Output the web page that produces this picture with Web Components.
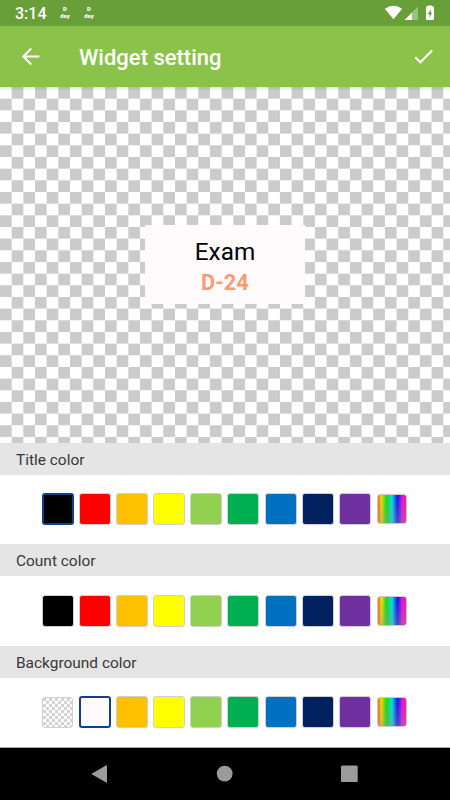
<!DOCTYPE html>
<html lang="en">
<head>
<meta charset="utf-8">
<title>Widget setting</title>
<style>
  body {
    margin: 0;
    background: #fff;
    font-family: Roboto, sans-serif;
  }
</style>
</head>
<body>
<widget-settings></widget-settings>
<script>
(function () {
  class StatusBar extends HTMLElement {
    connectedCallback() {
      this.attachShadow({ mode: "open" });
      this.shadowRoot.innerHTML = `
    <style>
      :host {
        display: flex;
        box-sizing: border-box;
        height: 26px;
        padding: 0 14px 0 15px;
        background: #689f38;
        color: #fff;
      }
      time {
        width: 44px;
        font: 500 16px/28px Roboto, sans-serif;
      }
      .day {
        width: 12px;
        margin-right: 12px;
        padding-top: 6px;
        font: 900 5.8px/6.5px Roboto, sans-serif;
        text-align: center;
      }
      svg {
        display: block;
        margin-left: auto;
      }
    </style>
    <time>3:14</time>
    <div class="day">D<br>day</div>
    <div class="day">D<br>day</div>
    <svg width="52" height="26" viewBox="384 0 52 26" fill="#fff">
      <path d="M384.8 8.8Q393.5 2.6 402.2 8.8L393.5 19.2Z"/>
      <path d="M418 6.5V20H404.5Z" opacity=".35"/>
      <path d="M412 12.5V20H404.5Z"/>
      <path fill-rule="evenodd" d="M428 6.2V5.6H432V6.2H433.2Q434 6.2 434 7V19.2Q434 20 433.2 20H426.8Q426 20 426 19.2V7Q426 6.2 426.8 6.2ZM430.7 9.2L427.8 14H429.5V17.4L432.2 12.7H430.7Z"/>
    </svg>
    `;
    }
  }

  class AppBar extends HTMLElement {
    connectedCallback() {
      this.attachShadow({ mode: "open" });
      this.shadowRoot.innerHTML = `
    <style>
      :host {
        display: flex;
        align-items: center;
        box-sizing: border-box;
        height: 61px;
        padding: 0 14px 0 18px;
        background: #8bc34a;
        color: #fff;
      }
      h1 {
        flex: 1;
        margin: 0 0 0 36px;
        font: 500 22px/30px Roboto, sans-serif;
        padding-top: 2px;
      }
      svg {
        display: block;
        fill: #fff;
      }
    </style>
    <svg width="25" height="25" viewBox="0 0 24 24"><path d="M20.5 11.1H7.4l6-6L12 3.7 3.7 12l8.3 8.3 1.4-1.4-6-6h13.1z"/></svg>
    <h1><slot></slot></h1>
    <svg width="25" height="25" viewBox="0 0 24 24"><path d="M9 16.17 4.83 12l-1.42 1.41L9 19 21 7l-1.41-1.41z"/></svg>
    `;
    }
  }

  class WidgetPreview extends HTMLElement {
    connectedCallback() {
      this.attachShadow({ mode: "open" });
      this.shadowRoot.innerHTML = `
    <style>
      :host {
        display: flex;
        align-items: center;
        justify-content: center;
        height: 355.5px;
        background:
          linear-gradient(rgba(0, 0, 0, 0.1), rgba(0, 0, 0, 0) 4px),
          conic-gradient(#cbcbcb 25%, #fff 0 50%, #cbcbcb 0 75%, #fff 0) 0 0 / 23.333px 23.333px;
      }
      .card {
        box-sizing: border-box;
        width: 160px;
        height: 79px;
        padding-top: 11px;
        background: #fffafb;
        text-align: center;
      }
      .title {
        font-size: 24.3px;
        line-height: 31px;
        color: #000;
      }
      .count {
        font-size: 21.8px;
        line-height: 31px;
        font-weight: 700;
        color: #ff9b74;
      }
    </style>
    <div class="card">
      <div class="title"><slot name="title"></slot></div>
      <div class="count"><slot name="count"></slot></div>
    </div>
    `;
    }
  }

  class ColorSwatch extends HTMLElement {
    connectedCallback() {
      const color = this.getAttribute("color");
      this.attachShadow({ mode: "open" });
      this.shadowRoot.innerHTML = `
    <style>
      :host {
        display: block;
        box-sizing: border-box;
        width: 32px;
        height: 32px;
        border: 1.5px solid #cfcfcf;
        border-radius: 3px;
        background: ${color};
      }
      :host([selected]) {
        border: 2px solid #123f8c;
      }
      :host([color="clear"]) {
        background: repeating-conic-gradient(#fff 0 25%, #d3d3d3 0 50%) 0 0 / 6px 6px;
        height: 31px;
        width: 31px;
        margin-right: 1px;
        border: 1px solid #d0d0d0;
      }
      :host([color="rainbow"]) {
        width: 30px;
        height: 30px;
        margin-left: 1px;
        border: 1px solid #d0c8c8;
        background:
          linear-gradient(rgba(128, 128, 128, 0), rgba(150, 150, 150, 0.4)) border-box,
          linear-gradient(90deg, #f84800, #f0e000 15%, #10e010 31%, #00e0e8 50%, #1010f0 68%, #f010e0 86%, #ff1060) border-box;
      }
    </style>
    `;
    }
  }

  class ColorSection extends HTMLElement {
    static colors = [
      "#000000", "#ff0000", "#ffc000", "#ffff00", "#92d050",
      "#00b050", "#0070c0", "#002060", "#7030a0", "rainbow",
    ];
    connectedCallback() {
      const colors = [...this.constructor.colors];
      const selected = this.getAttribute("selected");
      if (this.hasAttribute("background")) {
        colors.splice(0, 2, "clear", "#fffafb");
      }
      this.attachShadow({ mode: "open" });
      this.shadowRoot.innerHTML = `
    <style>
      :host {
        display: block;
        height: 101.6px;
      }
      h2 {
        margin: 0;
        height: 32px;
        padding-left: 16px;
        background: #e5e5e5;
        color: #383838;
        font: 400 15.45px/34px Roboto, sans-serif;
      }
      .colors {
        display: flex;
        align-items: center;
        gap: 5.1px;
        height: 69px;
        padding-left: 42px;
      }
    </style>
    <h2><slot></slot></h2>
    <div class="colors">
      ${colors
        .map((c) => `<color-swatch color="${c}" ${c === selected ? "selected" : ""}></color-swatch>`)
        .join("")}
    </div>
    `;
    }
  }

  class NavBar extends HTMLElement {
    connectedCallback() {
      this.attachShadow({ mode: "open" });
      this.shadowRoot.innerHTML = `
    <style>
      :host {
        display: flex;
        align-items: center;
        justify-content: space-between;
        box-sizing: border-box;
        height: 53px;
        padding: 0 92px 0 90px;
        border-top: 1px solid #aaa;
        background: #000;
      }
      svg {
        display: block;
        fill: #9b9b9b;
      }
    </style>
    <svg width="18" height="18"><path d="M1.3 8.9 16.2.3Q17 0 17 .8V17.2Q17 18 16.2 17.6Z"/></svg>
    <svg width="18" height="18"><circle cx="9.7" cy="8.6" r="7.9"/></svg>
    <svg width="18" height="18"><rect x="1" y=".4" width="16.7" height="16.7" rx="1.2"/></svg>
    `;
    }
  }

  class WidgetSettings extends HTMLElement {
    connectedCallback() {
      this.attachShadow({ mode: "open" });
      this.shadowRoot.innerHTML = `
    <style>
      :host {
        display: flex;
        flex-direction: column;
        width: 450px;
        height: 800px;
        overflow: hidden;
      }
      :host > * {
        flex: none;
      }
      nav-bar {
        margin-top: auto;
      }
    </style>
    <status-bar></status-bar>
    <app-bar>Widget setting</app-bar>
    <widget-preview>
      <span slot="title">Exam</span>
      <span slot="count">D-24</span>
    </widget-preview>
    <color-section selected="#000000">Title color</color-section>
    <color-section>Count color</color-section>
    <color-section background selected="#fffafb">Background color</color-section>
    <nav-bar></nav-bar>
    `;
    }
  }

  window.customElements.define("status-bar", StatusBar);
  window.customElements.define("app-bar", AppBar);
  window.customElements.define("widget-preview", WidgetPreview);
  window.customElements.define("color-swatch", ColorSwatch);
  window.customElements.define("color-section", ColorSection);
  window.customElements.define("nav-bar", NavBar);
  window.customElements.define("widget-settings", WidgetSettings);
})();
</script>
</body>
</html>
